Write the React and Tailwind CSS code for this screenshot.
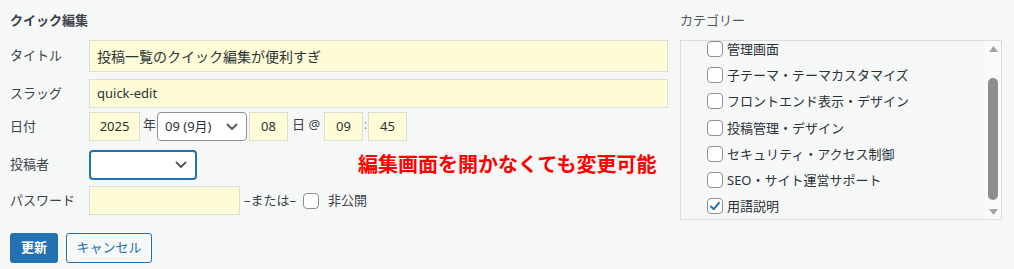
import React from "react";

const FONT = { fontFamily: '"Noto Sans","Noto Sans CJK JP",sans-serif' };

function Chevron() {
  return (
    <svg width="12" height="8" viewBox="0 0 12 8" fill="none">
      <polyline points="1.5,1.5 6,6 10.5,1.5" stroke="#50575e" strokeWidth="1.8" strokeLinecap="round" strokeLinejoin="round" />
    </svg>
  );
}

function Box({ checked }) {
  return (
    <span className="inline-flex w-4 h-4 shrink-0 items-center justify-center rounded-[4px] border border-[#8c8f94] bg-white">
      {checked && (
        <svg width="12" height="12" viewBox="0 0 12 12" fill="none">
          <polyline points="2,6.5 4.8,9.2 10,2.8" stroke="#2271b1" strokeWidth="2" strokeLinecap="round" strokeLinejoin="round" />
        </svg>
      )}
    </span>
  );
}

const yellow = "bg-[#fefcd7] border border-[#dcdcd0]";

export default function App() {
  const cats = [
    ["管理画面", false],
    ["子テーマ・テーマカスタマイズ", false],
    ["フロントエンド表示・デザイン", false],
    ["投稿管理・デザイン", false],
    ["セキュリティ・アクセス制御", false],
    ["SEO・サイト運営サポート", false],
    ["用語説明", true],
  ];
  return (
    <div className="w-[1014px] h-[269px] bg-[#f6f7f7] flex pl-[10px] text-[13px] text-[#3c434a]" style={FONT}>
      {/* left column */}
      <div className="w-[658px] flex flex-col">
        <div className="h-[40px] pt-[10px] font-semibold text-[13px] leading-[20px] text-[#3c434a]">クイック編集</div>

        <div className="flex items-center h-[32px]">
          <span className="w-[79px]">タイトル</span>
          <div className={`flex-1 h-full flex items-center px-[7px] text-[14px] text-[#2c3338] ${yellow}`}>投稿一覧のクイック編集が便利すぎ</div>
        </div>

        <div className="flex items-center h-[29px] mt-[7px]">
          <span className="w-[79px]">スラッグ</span>
          <div className={`flex-1 h-full flex items-center px-[7px] text-[13px] text-[#2c3338] ${yellow}`}>quick-edit</div>
        </div>

        <div className="flex items-start h-[29px] mt-[4px]">
          <span className="w-[79px] self-center">日付</span>
          <div className={`w-[51px] h-full flex items-center justify-center text-[#2c3338] ${yellow}`}>2025</div>
          <span className="w-[17px] pl-[3px] pt-[3px] leading-[18px]">年</span>
          <div className="w-[90px] h-full flex items-center justify-between pl-[7px] pr-[8px] bg-white border border-[#8c8f94] rounded-[4px] text-[#2c3338]">
            <span>09 (9月)</span>
            <Chevron />
          </div>
          <div className={`ml-[2px] w-[39px] h-full flex items-center justify-center text-[#2c3338] ${yellow}`}>08</div>
          <span className="w-[36px] pl-[4px] pt-[3px] leading-[18px]">日 @</span>
          <div className={`w-[39px] h-full flex items-center justify-center text-[#2c3338] ${yellow}`}>09</div>
          <span className="w-[5px] text-center pt-[3px] leading-[18px] text-[#8c8f94]">:</span>
          <div className={`w-[39px] h-full flex items-center justify-center text-[#2c3338] ${yellow}`}>45</div>
        </div>

        <div className="flex items-center h-[30px] mt-[9px]">
          <span className="w-[79px]">投稿者</span>
          <div className="w-[108px] h-full flex items-center justify-end pr-[8px] bg-white border-2 border-[#2271b1] rounded-[4px]">
            <Chevron />
          </div>
          <span className="ml-[161px] text-[20px] font-bold text-[#ff0000] leading-[28px]">編集画面を開かなくても変更可能</span>
        </div>

        <div className="flex items-center h-[29px] mt-[6px]">
          <span className="w-[79px]">パスワード</span>
          <div className={`w-[151px] h-full ${yellow}`}></div>
          <span className="ml-[4px] w-[57px] whitespace-nowrap">–または–</span>
          <span className="ml-[2px] flex"><Box /></span>
          <span className="ml-[9px]">非公開</span>
        </div>

        <div className="flex items-center h-[30px] mt-[18px] gap-[8px]">
          <div className="w-[48px] h-full flex items-center justify-center rounded-[3px] bg-[#2271b1] text-white font-semibold">更新</div>
          <div className="w-[86px] h-full flex items-center justify-center rounded-[3px] border border-[#2271b1] text-[#2271b1]">キャンセル</div>
        </div>
      </div>

      {/* right column */}
      <div className="ml-[12px] w-[322px] flex flex-col">
        <div className="h-[40px] pt-[10px] leading-[20px] text-[#50575e]">カテゴリー</div>
        <div className="h-[180px] border border-[#dcdcde] flex overflow-hidden">
          <div className="flex-1 overflow-hidden pl-[26px]">
            <div className="-mt-[5px] flex flex-col">
              {cats.map(([t, c]) => (
                <div key={t} className="h-[26.2px] flex items-center gap-[4px] text-[#2c3338]">
                  <Box checked={c} />
                  <span className="leading-[18px]">{t}</span>
                </div>
              ))}
            </div>
          </div>
          <div className="w-[16px] bg-[#fafafa] flex flex-col items-center pt-[5px] pb-[4px]">
            <svg width="9" height="6" viewBox="0 0 9 6"><polygon points="4.5,0 9,6 0,6" fill="#a3a3a3" /></svg>
            <div className="mt-[26px] w-[10px] h-[122px] rounded-[5px] bg-[#8d8d8d]"></div>
            <div className="flex-1"></div>
            <svg width="9" height="6" viewBox="0 0 9 6"><polygon points="0,0 9,0 4.5,6" fill="#a3a3a3" /></svg>
          </div>
        </div>
      </div>
    </div>
  );
}
